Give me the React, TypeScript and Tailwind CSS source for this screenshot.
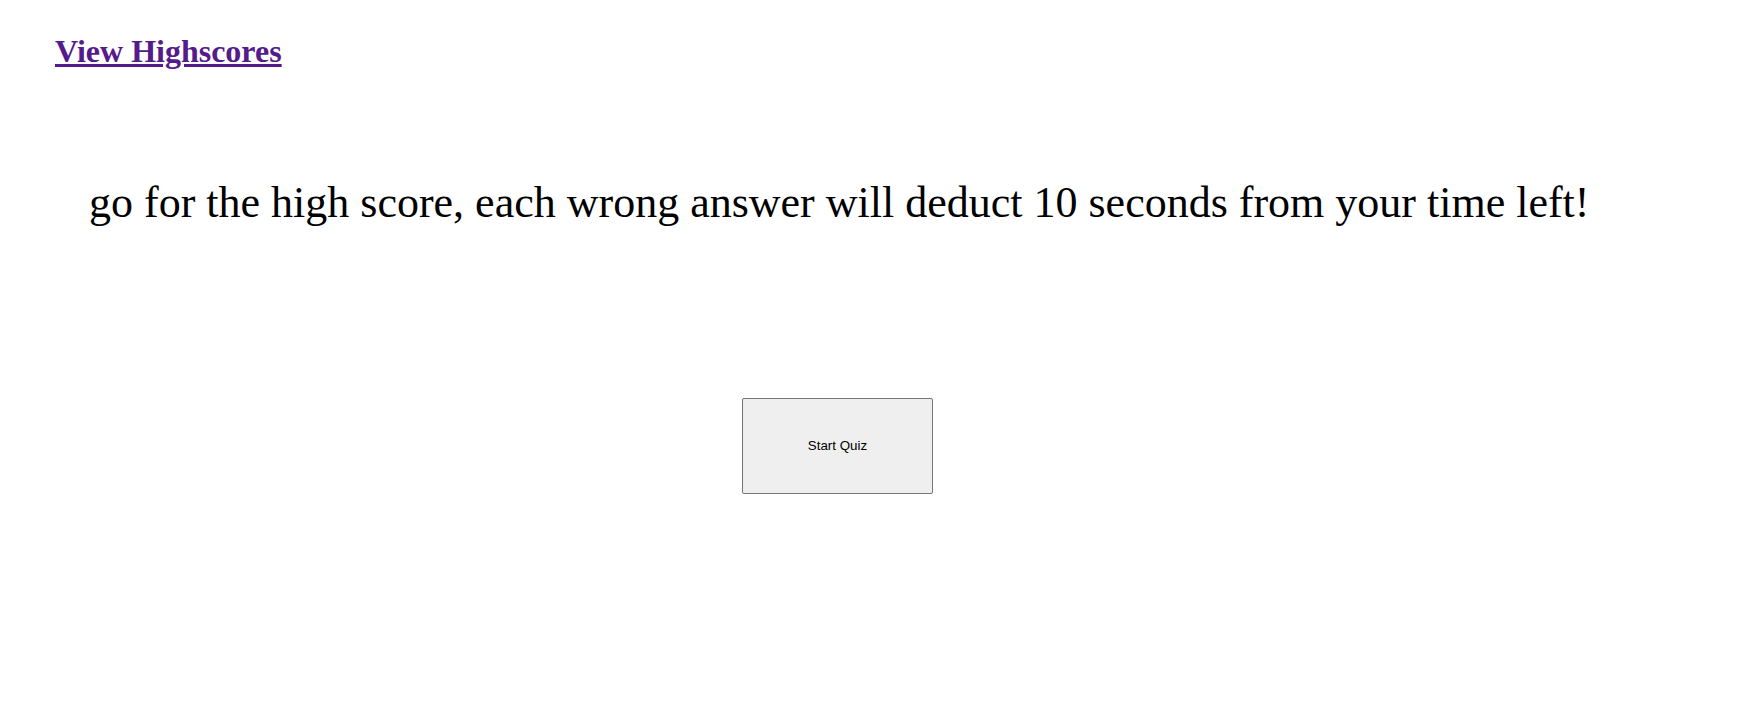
export default function App() {
  return (
    <main className="min-h-[703px] bg-white font-['Liberation_Serif',serif] text-black">
      <header className="pl-[55px] pt-[35px] leading-none">
        <a
          href="#"
          className="block w-fit text-[32px] font-bold leading-none text-[#551a8b] underline"
        >
          View Highscores
        </a>
      </header>

      <section className="pl-[89px] pt-[114px]">
        <p className="text-[44px] leading-none">
          go for the high score, each wrong answer will deduct 10 seconds from your time left!
        </p>
      </section>

      <div className="pl-[742px] pt-[173px] leading-none">
        <button className="h-[96px] w-[191px] rounded-[2px] border border-[#767676] bg-[#efefef] font-['Liberation_Sans',Arial,sans-serif] text-[13.33px] text-black">
          Start Quiz
        </button>
      </div>
    </main>
  );
}
